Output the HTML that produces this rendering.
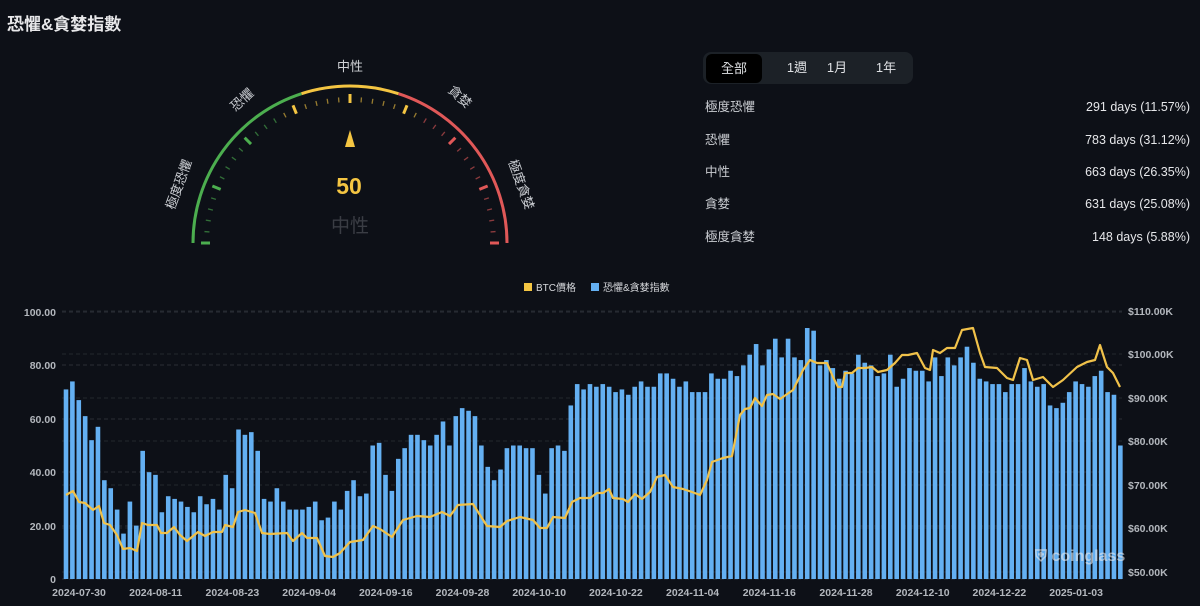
<!DOCTYPE html>
<html><head><meta charset="utf-8">
<style>
html,body{margin:0;padding:0;background:#0d1017;width:1200px;height:606px;overflow:hidden;font-family:"Liberation Sans","Noto Sans CJK TC",sans-serif;color:#d6d8dc}
.t{position:absolute;left:7px;top:10px;font-size:17px;font-weight:bold;color:#e8e8ea}
.tabs{position:absolute;left:703px;top:52px;width:210px;height:32px;background:#1c2127;border-radius:8px}
.tabs div{position:absolute;top:0;height:32px;line-height:32px;font-size:13px;color:#dfe1e4;text-align:center}
.row{position:absolute;left:705px;width:485px;font-size:12.5px;color:#c9ccd1;height:18px;line-height:18px}
.row span{position:absolute;right:0;top:0;color:#e6e7ea;line-height:18px}
svg{position:absolute;left:0;top:0}
</style></head><body>
<div class="t">恐懼&amp;貪婪指數</div>
<div class="tabs">
<div style="left:3px;top:2px;width:56px;height:29px;line-height:29px;background:#000;border-radius:6px">全部</div>
<div style="left:66px;width:56px">1週</div>
<div style="left:106px;width:56px">1月</div>
<div style="left:155px;width:56px">1年</div>
</div>
<div class="row" style="top:98px">極度恐懼<span>291 days (11.57%)</span></div>
<div class="row" style="top:131px">恐懼<span>783 days (31.12%)</span></div>
<div class="row" style="top:163px">中性<span>663 days (26.35%)</span></div>
<div class="row" style="top:195px">貪婪<span>631 days (25.08%)</span></div>
<div class="row" style="top:228px">極度貪婪<span>148 days (5.88%)</span></div>

<svg id="g" width="1200" height="606" xmlns="http://www.w3.org/2000/svg">
<g id="ticks"></g>
<path d="M193,243 A157,157 0 0 1 301.5,93.7" fill="none" stroke="#4cae4f" stroke-width="3"/>
<path d="M301.5,93.7 A157,157 0 0 1 398.5,93.7" fill="none" stroke="#f4c542" stroke-width="3"/>
<path d="M398.5,93.7 A157,157 0 0 1 507,243" fill="none" stroke="#e05858" stroke-width="3"/>
<polygon points="350,130 345,147 355,147" fill="#f4c542"/>
<text x="349" y="194" text-anchor="middle" font-size="23" font-weight="bold" fill="#f4c542" font-family="Liberation Sans,sans-serif">50</text>
<text x="350" y="232" text-anchor="middle" font-size="19" fill="#3a3d44">中性</text>
<text x="350" y="71" text-anchor="middle" font-size="13" fill="#d0d2d6">中性</text>
<text x="0" y="0" font-size="13" fill="#c9ccd1" transform="translate(245,103) rotate(-42)" text-anchor="middle">恐懼</text>
<text x="0" y="0" font-size="13" fill="#c9ccd1" transform="translate(457,100) rotate(42)" text-anchor="middle">貪婪</text>
<text x="0" y="0" font-size="13" fill="#c9ccd1" transform="translate(183,186) rotate(-70)" text-anchor="middle">極度恐懼</text>
<text x="0" y="0" font-size="13" fill="#c9ccd1" transform="translate(517,186) rotate(70)" text-anchor="middle">極度貪婪</text>

<rect x="524" y="283" width="8" height="8" fill="#f4c542"/>
<text x="536" y="291" font-size="10" fill="#d6d8dc">BTC價格</text>
<rect x="591" y="283" width="8" height="8" fill="#64b0f2"/>
<text x="603" y="291" font-size="10" fill="#d6d8dc">恐懼&amp;貪婪指數</text>
<g id="grid"></g>
<g id="bars"></g>
<polyline id="line" fill="none" stroke="#f1c24a" stroke-width="2.2" stroke-linejoin="round"/>
<text x="1035" y="561" font-size="16" fill="#e8eaee" opacity="0.6" font-weight="bold">⛨ coinglass</text>
<g id="labs" font-size="10.5" fill="#b3b7bd" font-weight="bold"></g>
</svg>
<script>
var NS="http://www.w3.org/2000/svg";
function el(t,a,p){var e=document.createElementNS(NS,t);for(var k in a)e.setAttribute(k,a[k]);if(p)p.appendChild(e);return e;}
var tk=document.getElementById("ticks");
for(var i=0;i<=40;i++){var ang=Math.PI-(i/40)*Math.PI;var major=i%5==0;
var col=i<=13?"#4cae4f":(i<=26?"#f4c542":"#e05858");
var r1=major?140:141,r2=major?149:146;
var c=Math.cos(ang),s=Math.sin(ang);
el("line",{x1:350+c*r1,y1:243-s*r1,x2:350+c*r2,y2:243-s*r2,stroke:col,"stroke-width":major?3:1.3,opacity:major?1:0.6},tk);}
var v=[71,74,67,61,52,57,37,34,26,17,29,20,48,40,39,25,31,30,29,27,25,31,28,30,26,39,34,56,54,55,48,30,29,34,29,26,26,26,27,29,22,23,29,26,33,37,31,32,50,51,39,33,45,
49,54,54,52,50,54,59,50,61,64,63,61,50,42,37,41,49,50,50,49,49,39,32,49,50,48,65,73,71,73,72,73,72,70,71,69,72,74,72,72,77,77,75,72,74,70,70,70,77,75,75,78,76,80,84,88,80,86,90,83,
90,83,82,94,93,80,82,79,75,78,77,84,81,80,76,77,84,72,75,79,78,78,74,83,76,83,80,83,87,81,75,74,73,73,70,73,73,79,74,72,73,65,64,66,70,74,73,72,76,78,70,69,50];
var g=document.getElementById("grid"),b=document.getElementById("bars"),L=document.getElementById("labs");
var ly=[312,365,419,472,526,579],lt=["100.00","80.00","60.00","40.00","20.00","0"];
for(var i=0;i<6;i++){el("line",{x1:62,x2:1122,y1:ly[i],y2:ly[i],stroke:"#2a2e36","stroke-dasharray":"4 3"},g);
var t=el("text",{x:56,y:ly[i]+4,"text-anchor":"end"},L);t.textContent=lt[i];}
var ry=[311,354,398,441,485,528,572],rt=["$110.00K","$100.00K","$90.00K","$80.00K","$70.00K","$60.00K","$50.00K"];
for(var i=0;i<7;i++){el("line",{x1:62,x2:1122,y1:ry[i],y2:ry[i],stroke:"#23272e","stroke-dasharray":"4 3"},g);
var t=el("text",{x:1128,y:ry[i]+4},L);t.textContent=rt[i];}
for(var i=0;i<v.length;i++){var x=66+i*6.39;var h=v[i]*2.67;el("rect",{x:x-2.3,y:579-h,width:4.6,height:h,fill:"#64b0f2"},b);}
var d=["2024-07-30","2024-08-11","2024-08-23","2024-09-04","2024-09-16","2024-09-28","2024-10-10","2024-10-22","2024-11-04","2024-11-16","2024-11-28","2024-12-10","2024-12-22","2025-01-03"];
for(var i=0;i<d.length;i++){var t=el("text",{x:79+i*76.7,y:596,"text-anchor":"middle"},L);t.textContent=d[i];}
var p="66,495 73,491 79,502 85,503 93,510 99,506 104,523 110,525 117,535 123,549 130,548 137,551 142,523 148,525 157,525 161,533 167,533 174,527 180,535 187,541 198,532 205,536 213,532 222,532 225,525 233,527 238,512 245,510 255,513 262,533 270,534 287,533 293,541 302,533 307,538 317,538 325,556 333,557 340,553 350,542 363,540 373,526 380,529 392,537 403,520 417,516 430,517 442,512 450,516 458,505 473,504 487,526 500,527 507,521 520,517 533,520 540,528 547,528 553,517 565,518 572,502 580,498 590,498 597,493 603,493 609,489 613,498 623,499 628,502 635,494 642,499 650,492 657,477 665,475 673,487 683,489 692,492 700,495 707,480 712,462 723,458 732,456 740,415 745,409 750,408 755,398 762,406 767,395 773,394 780,399 793,390 803,370 810,360 817,363 827,363 833,377 838,387 842,387 845,373 852,373 858,368 865,368 872,367 878,372 887,370 895,363 902,355 908,355 917,353 925,368 930,370 933,350 940,353 947,348 955,348 962,330 973,328 980,353 985,367 997,368 1007,378 1013,380 1020,358 1027,360 1033,380 1043,377 1053,387 1063,380 1077,367 1087,362 1095,360 1100,345 1107,367 1113,373 1120,387";
document.getElementById("line").setAttribute("points",p);
</script>
</body></html>
